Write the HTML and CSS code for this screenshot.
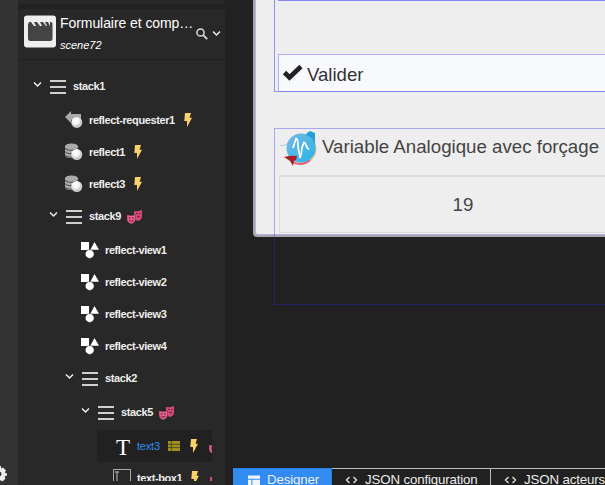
FILE: index.html
```
<!DOCTYPE html>
<html lang="fr">
<head>
<meta charset="utf-8">
<title>Designer</title>
<link rel="stylesheet" href="styles.css">
</head>
<body>
<svg class="defs" aria-hidden="true">
  <defs>
    <radialGradient id="ball" cx=".4" cy=".35"><stop offset="0" stop-color="#fff"/><stop offset=".65" stop-color="#f2f2f2"/><stop offset="1" stop-color="#c8c8c8"/></radialGradient>
    <linearGradient id="sky" x1="0" y1="0" x2="1" y2="1"><stop offset="0" stop-color="#77b9df"/><stop offset="1" stop-color="#23b4ed"/></linearGradient>
  </defs>
  <symbol id="chev" viewBox="0 0 9 9"><path d="M1 2.500l3.500 3.500L8 2.500" fill="none" stroke="#eee" stroke-width="1.500"/></symbol>
  <symbol id="stack" viewBox="0 0 18 18"><path d="M0 4h16M0 10h16M0 16h16" stroke="#cfcfcf" stroke-width="2"/></symbol>
  <symbol id="requester" viewBox="0 0 18 18"><path d="M0 6l6-6v3h10v6H6v3z" fill="#aaa"/><circle cx="11.800" cy="11.400" r="5.500" fill="url(#ball)"/></symbol>
  <symbol id="db" viewBox="0 0 18 18"><path d="M0 3.500C0-.6 13-.6 13 3.500v9C13 16 0 16 0 12.500z" fill="#aaa"/><path d="M0 5c1 3 12 3 13 0M0 8.500c1 3 12 3 13 0M0 12c1 3 12 3 13 0" fill="none" stroke="#444"/><circle cx="11.800" cy="11.500" r="5.500" fill="url(#ball)"/></symbol>
  <symbol id="shapes" viewBox="0 0 18 18"><path d="M0 1h8v8H0zM9.300 8.700L13.500 1l4.500 7.700z" fill="#fff"/><circle cx="8.700" cy="13" r="4.400" fill="#fff" stroke="#282828" stroke-width=".5"/></symbol>
  <symbol id="bolt" viewBox="0 0 8 14"><path d="M1 0h6L5.500 4.700H8L3 14V8H.300z" fill="#fbd169"/></symbol>
  <symbol id="masks" viewBox="0 0 15 14"><path d="M7 1q4 1 8-1V6q0 4-4 5Q7 10 7 6z" fill="#d54a77"/><path d="M0 4.700q4 1.500 8.500 0v5q-.5 3-4.200 4.300Q.3 13 0 9.500z" fill="#ee5f8c" stroke="#282828" stroke-width=".4"/><path d="M1.700 8h1.700M5 8h1.700M9 3.500h1.500M12 3.500h1.500M10 7q1.500-1.500 3 0M2.300 10.300q2 2 4 0" fill="none" stroke="#421e2c" stroke-width="1"/></symbol>
  <symbol id="list" viewBox="0 0 12 10"><path d="M0 0h12v10H0z" fill="#a3911f"/><path d="M0 3.300h12M0 6.600h12M3.300 0v10" stroke="#383314" stroke-width=".7"/></symbol>
  <symbol id="code" viewBox="0 0 13 8"><path d="M4.500 1L1.500 4l3 3M8.500 1l3 3-3 3" fill="none" stroke="#ddd" stroke-width="1.400"/></symbol>
</svg>

<div class="app">
  <nav class="rail"><svg class="gear" viewBox="0 0 16 16"><path d="M6 0h4v2.500l2-1 3 3-1.300 2L16 7.500v2l-2.500 1 1 2-3 3-2-1.500L9 16H6l-1-2.500-2 1-2-2.500 1.500-2L0 9V6l2.500-1-1-2 2-2 2 1.500z" fill="#eee"/><circle cx="8" cy="8" r="2.500" fill="#333"/></svg></nav>

  <aside class="side">
    <div class="previous"></div>
    <section class="panel">
      <header class="head">
        <svg class="scene" viewBox="0 0 32 32"><rect width="32" height="32" rx="3" fill="#eee"/><path d="M5 6.500h2l3 4h2l-2-4h3l3 4h2l-2-4h3l3 4h1l-2-4h3l2 4V6.500h1q1.500 0 1.500 2V23q0 2.500-2.500 2.500H6.500Q4 25.500 4 23V9z" fill="#444"/></svg>
        <div class="titles"><div class="title">Formulaire et comp…</div><div class="subtitle">scene72</div></div>
        <svg class="search" viewBox="0 0 12 12"><circle cx="4.500" cy="4.500" r="3.600" fill="none" stroke="#ddd" stroke-width="1.500"/><path d="M7.200 7.200l4 4" stroke="#ddd" stroke-width="1.800"/></svg>
        <svg class="more"><use href="#chev"/></svg>
      </header>
      <div class="tree">
        <div class="row"><svg class="chev"><use href="#chev"/></svg><svg class="ico"><use href="#stack"/></svg><span class="name">stack1</span></div>
        <div class="kids">
          <div class="row leaf"><svg class="ico"><use href="#requester"/></svg><span class="name">reflect-requester1</span><svg class="bolt"><use href="#bolt"/></svg></div>
          <div class="row leaf"><svg class="ico"><use href="#db"/></svg><span class="name">reflect1</span><svg class="bolt"><use href="#bolt"/></svg></div>
          <div class="row leaf"><svg class="ico"><use href="#db"/></svg><span class="name">reflect3</span><svg class="bolt"><use href="#bolt"/></svg></div>
          <div class="row"><svg class="chev"><use href="#chev"/></svg><svg class="ico"><use href="#stack"/></svg><span class="name">stack9</span><svg class="masks"><use href="#masks"/></svg></div>
          <div class="kids">
            <div class="row leaf"><svg class="ico"><use href="#shapes"/></svg><span class="name">reflect-view1</span></div>
            <div class="row leaf"><svg class="ico"><use href="#shapes"/></svg><span class="name">reflect-view2</span></div>
            <div class="row leaf"><svg class="ico"><use href="#shapes"/></svg><span class="name">reflect-view3</span></div>
            <div class="row leaf"><svg class="ico"><use href="#shapes"/></svg><span class="name">reflect-view4</span></div>
            <div class="row"><svg class="chev"><use href="#chev"/></svg><svg class="ico"><use href="#stack"/></svg><span class="name">stack2</span></div>
            <div class="kids">
              <div class="row"><svg class="chev"><use href="#chev"/></svg><svg class="ico"><use href="#stack"/></svg><span class="name">stack5</span><svg class="masks"><use href="#masks"/></svg></div>
              <div class="kids">
                <div class="row leaf selected"><span class="letter">T</span><span class="name">text3</span><svg class="list"><use href="#list"/></svg><svg class="bolt near"><use href="#bolt"/></svg><svg class="masks far"><use href="#masks"/></svg></div>
                <div class="row leaf"><svg class="box" viewBox="0 0 18 18"><rect x=".5" y=".5" width="17" height="15" fill="none" stroke="#aaa"/><path d="M2 3h4M4 3v9" stroke="#999" stroke-width="1.300"/></svg><span class="name">text-box1</span><svg class="bolt"><use href="#bolt"/></svg><svg class="masks far"><use href="#masks"/></svg></div>
              </div>
            </div>
          </div>
        </div>
      </div>
    </section>
  </aside>

  <main class="main">
    <div class="canvas">
      <div class="page">
        <div class="group first">
          <div class="upper"></div>
          <div class="button"><svg class="check" viewBox="0 0 20 16"><path d="M1.500 8.500l5 5L18 2.500" fill="none" stroke="#222" stroke-width="4.700"/></svg>Valider</div>
        </div>
        <div class="group second">
          <div class="label">
            <svg class="logo" viewBox="0 0 38 36"><path d="M1 14q4 2 9-3" fill="none" stroke="#9fd2e8"/><circle cx="23" cy="18" r="14.500" fill="#edb992"/><path d="M14 31q9 5 17-2" fill="none" stroke="#e85f76" stroke-width="2"/><circle cx="22" cy="17" r="14.500" fill="url(#sky)"/><path d="M28 2l3-2 5 2v12q-2-8-9-10z" fill="#239fdb"/><path d="M14 17l3-9.500q2 0 2 8l2 11q1 0 2-10l2-5q2 1 3 5l2 2" fill="none" stroke="#fff" stroke-width="1.700"/><path d="M5 26q7-2 13-1l-1 4-2 1-1 5-3-5z" fill="#aa2026"/></svg>
            <span>Variable Analogique avec forçage</span>
          </div>
          <div class="value">19</div>
        </div>
      </div>
    </div>
    <div class="tabs">
      <div class="tab active"><svg class="layout" viewBox="0 0 12 10"><path d="M0 .5h12v3.300H0zM0 4.800h3.400V10H0zM4.400 4.800H12V10H4.400z" fill="#f0f5fc"/></svg><span>Designer</span></div>
      <div class="tab"><svg class="code"><use href="#code"/></svg><span>JSON configuration</span></div>
      <div class="tab"><svg class="code"><use href="#code"/></svg><span>JSON acteurs</span></div>
    </div>
  </main>
</div>
</body>
</html>
```
FILE: styles.css
```
* { box-sizing: border-box; }
body { margin: 0; background: #212121; color: #eee; font-family: "Liberation Sans", Arial, sans-serif; overflow: hidden; }
svg { flex: none; display: block; overflow: visible; }
.defs { width: 0; height: 0; position: absolute; }
.app { display: flex; width: 605px; height: 485px; overflow: hidden; }
.rail { flex: none; width: 18px; background: #333; display: flex; align-items: flex-end; overflow: hidden; }
.gear { width: 16px; height: 16px; margin: 0 0 3px -9px; }
.side { flex: none; width: 207px; display: flex; flex-direction: column; }
.previous { height: 4px; flex: none; background: #282828; border-radius: 0 0 3px 3px; }
.panel { flex: 1; min-height: 0; margin-top: 5px; background: #282828; border-radius: 3px 3px 0 0; padding-bottom: 4px; display: flex; flex-direction: column; }
.head { flex: none; height: 51px; display: flex; align-items: flex-start; padding: 6px 4px 0 6px; border-bottom: 1px solid #202020; }
.scene { width: 32px; height: 33px; }
.titles { width: 136px; margin-left: 4px; white-space: nowrap; }
.title { font-size: 14px; line-height: 17px; height: 23px; letter-spacing: -.07px; color: #fff; }
.subtitle { font-size: 11px; line-height: 14px; font-style: italic; color: #fff; }
.search { width: 12px; height: 12px; margin: 13px 0 0 1px; }
.more { width: 9px; height: 9px; margin: 14px 0 0 4px; }
.tree { flex: 1; min-height: 0; width: 194px; overflow: hidden; padding: 10px 0 0 15px; }
.kids { margin-top: 2px; padding-left: 16px; }
.row { height: 32px; display: flex; align-items: center; white-space: nowrap; }
.chev { width: 9px; height: 9px; margin: -3px 8px 0 0; }
.ico { width: 18px; height: 18px; margin-right: 5px; }
.leaf .ico { margin-left: 16px; margin-right: 6px; }
.name { font-size: 11px; font-weight: bold; line-height: 14px; letter-spacing: -.4px; }
.bolt { width: 8px; height: 14px; margin-left: 9px; }
.masks { width: 15px; height: 14px; margin: 1px 0 0 6px; }
.selected { background: #212121; }
.selected .name { color: #328bf0; font-weight: normal; letter-spacing: -.2px; }
.letter { flex: none; width: 21px; margin: 3px 0 0 19px; font: 23px "Liberation Serif", serif; color: #fff; }
.list { width: 12px; height: 10px; margin-left: 8px; }
.near { margin-left: 10px; }
.far { margin-left: 11px; }
.box { width: 18px; height: 18px; margin: 0 6px 0 16px; }
.main { flex: 1; min-width: 0; padding-left: 8px; display: flex; flex-direction: column; }
.canvas { flex: none; height: 468px; padding-left: 20px; overflow: hidden; }
.page { width: 460px; height: 237px; background: #eee; border-left: 2px solid #a6a6a6; border-bottom: 2px solid #a6a6a6; border-radius: 0 0 0 4px; box-shadow: inset 1px -1px #b3b3e8; padding-left: 19px; }
.group { border: 1px solid rgba(40, 40, 255, .36); border-right: 0; }
.first { height: 92px; border-top: 0; border-color: #9292ed; padding-left: 3px; }
.upper { height: 54px; border-top: 1px solid #8787f2; }
.button { height: 38px; border: 1px solid #adadf0; border-bottom-color: #8383ef; background: #f8f9fc; color: #333; display: flex; align-items: center; padding: 3px 0 0 4px; font-size: 18.600px; }
.check { width: 20px; height: 16px; margin: -5px 4px 0 0; }
.second { height: 177px; margin-top: 36px; padding: 0 0 0 4px; color: #444; font-size: 18.700px; }
.label { height: 46px; display: flex; align-items: flex-start; white-space: nowrap; line-height: 20px; }
.label span { padding-top: 8px; }
.logo { width: 38px; height: 36px; margin: 2px 5px 0 0; }
.value { height: 58px; width: 368px; border: 1px solid #ddd; border-top-width: 2px; display: flex; align-items: center; justify-content: center; }
.tabs { height: 17px; display: flex; font-size: 13.300px; letter-spacing: -.15px; line-height: 16px; white-space: nowrap; overflow: hidden; }
.tab { flex: none; height: 28px; border: 1px solid #bbb; border-left: 0; display: flex; align-items: flex-start; padding: 3px 12px 0 13px; color: #eee; }
.active { width: 99px; background: #328bf0; border-color: #2580e8; padding-left: 15px; }
.tab:nth-child(2) { width: 159px; }
.tab:nth-child(3) { width: 180px; }
.layout { width: 12px; height: 10px; margin: 3px 7px 0 0; }
.code { width: 13px; height: 8px; margin: 4px 7px 0 0; }
```
